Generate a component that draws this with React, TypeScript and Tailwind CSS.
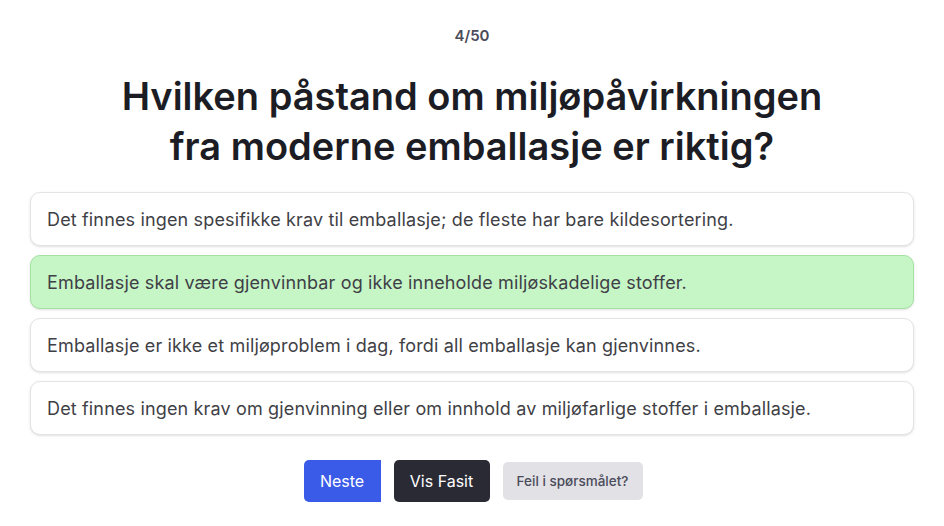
const options = [
    { text: 'Det finnes ingen spesifikke krav til emballasje; de fleste har bare kildesortering.', correct: false },
    { text: 'Emballasje skal være gjenvinnbar og ikke inneholde miljøskadelige stoffer.', correct: true },
    { text: 'Emballasje er ikke et miljøproblem i dag, fordi all emballasje kan gjenvinnes.', correct: false },
    { text: 'Det finnes ingen krav om gjenvinning eller om innhold av miljøfarlige stoffer i emballasje.', correct: false },
];

const App = () => {
    return (
        <div className="min-h-screen bg-white font-['Inter',sans-serif]">
            <div className="mx-auto flex max-w-[884px] flex-col items-center pt-[26px]">
                <p className="text-[15px] font-semibold leading-5 text-[#4b4b5a]">4/50</p>
                <h1 className="mt-[25px] max-w-[720px] text-center text-[38px] font-semibold leading-[50px] text-[#1c1c24]">
                    Hvilken påstand om miljøpåvirkningen fra moderne emballasje er riktig?
                </h1>
                <ul className="mt-[21px] flex w-full flex-col gap-[9px]">
                    {options.map((option) => (
                        <li
                            key={option.text}
                            className={
                                option.correct
                                    ? 'flex h-[54px] items-center rounded-[10px] border border-[#a3e2a3] bg-[#c6f5c6] px-[16px] text-[18px] tracking-[0.15px] text-[#3f3f46] shadow-sm'
                                    : 'flex h-[54px] items-center rounded-[10px] border border-[#e4e4e7] bg-white px-[16px] text-[18px] tracking-[0.15px] text-[#3f3f46] shadow-sm'
                            }
                        >
                            {option.text}
                        </li>
                    ))}
                </ul>
                <div className="mt-[25px] flex items-center gap-[13px] pl-[2px]">
                    <button className="h-[42px] w-[77px] rounded-l-[5px] bg-[#3a5ae8] text-[16px] text-white">Neste</button>
                    <button className="h-[42px] w-[96px] rounded-[5px] bg-[#2a2a35] text-[16px] text-white">Vis Fasit</button>
                    <button className="h-[38px] w-[140px] rounded-[5px] bg-[#e1e1e6] text-[13.5px] font-medium text-[#4b4b5a]">
                        Feil i spørsmålet?
                    </button>
                </div>
            </div>
        </div>
    );
};

export default App;
